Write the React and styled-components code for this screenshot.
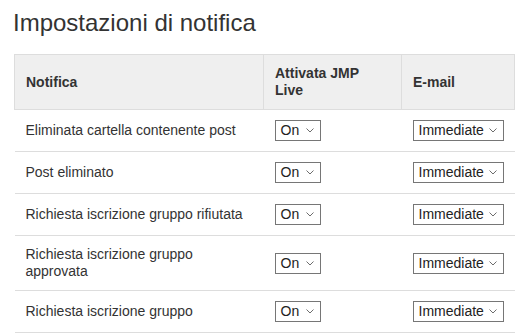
import React from 'react'
import styled, { createGlobalStyle } from 'styled-components'

const GlobalStyle = createGlobalStyle`
    body {
        margin: 0;
        background: #fff;
        font-family: "Liberation Sans", Arial, sans-serif;
        color: #333;
    }
`;

const rows = [
    'Eliminata cartella contenente post',
    'Post eliminato',
    'Richiesta iscrizione gruppo rifiutata',
    'Richiesta iscrizione gruppo approvata',
    'Richiesta iscrizione gruppo',
];

function Chevron() {
    return (
        <svg width="8" height="5" viewBox="0 0 8 5" fill="none">
            <path d="M0.5 0.5 L4 4 L7.5 0.5" stroke="#6d6d6d" strokeWidth="1" />
        </svg>
    )
}

function Select({ value, wide }) {
    return (
        <SelectBox wide={wide}>
            <span>{value}</span>
            <Chevron />
        </SelectBox>
    )
}

export default function App() {
    return (
        <>
        <GlobalStyle />
        <Page>
            <Title>Impostazioni di notifica</Title>
            <Table>
                <colgroup>
                    <col style={{ width: 249 }} />
                    <col style={{ width: 138 }} />
                    <col style={{ width: 113 }} />
                </colgroup>
                <thead>
                    <tr>
                        <Th>Notifica</Th>
                        <Th>Attivata JMP Live</Th>
                        <Th>E-mail</Th>
                    </tr>
                </thead>
                <tbody>
                    {rows.map(r => (
                        <tr key={r}>
                            <Td>{r}</Td>
                            <Td><Select value="On" /></Td>
                            <Td><Select value="Immediate" wide /></Td>
                        </tr>
                    ))}
                </tbody>
            </Table>
        </Page>
        </>
    )
}

const Page = styled.div`
    padding: 9px 14px 0;
`;

const Title = styled.h1`
    margin: 0 0 17px -1px;
    font-size: 24px;
    line-height: 28px;
    font-weight: normal;
    color: #333;
`;

const Table = styled.table`
    width: 500px;
    table-layout: fixed;
    border-collapse: collapse;
    font-size: 14px;
    line-height: 17px;
`;

const Th = styled.th`
    background: #efefef;
    border: 1px solid #ddd;
    padding: 10px 11px;
    text-align: left;
    font-weight: bold;
    vertical-align: middle;
`;

const Td = styled.td`
    border-bottom: 1px solid #ddd;
    padding: 10px 11px;
    vertical-align: middle;
`;

const SelectBox = styled.div`
    display: flex;
    align-items: center;
    justify-content: space-between;
    box-sizing: border-box;
    width: ${({ wide }) => wide ? '91px' : '46px'};
    height: 21px;
    padding: 0 6px 0 5px;
    border: 1px solid #767676;
    background: #fff;
    font-size: 14px;
    color: #222;
    svg {
        flex: none;
    }
`;
